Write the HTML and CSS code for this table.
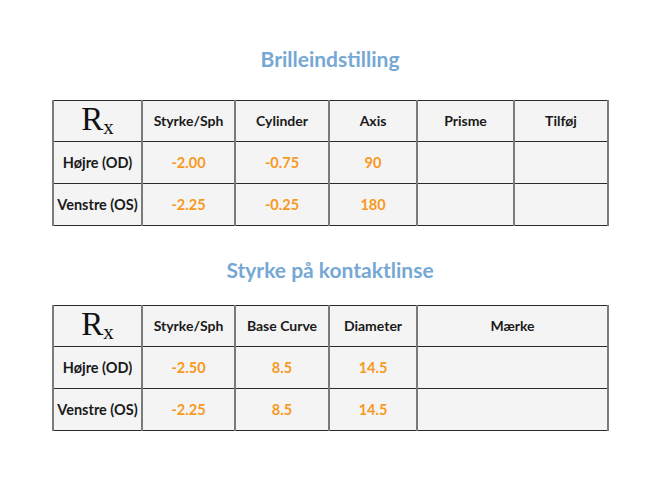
FILE: index.html
```html
<!DOCTYPE html>
<html>
<head>
<meta charset="utf-8">
<link rel="stylesheet" href="styles.css">
</head>
<body>
<div class="page">
  <h2 class="title t1">Brilleindstilling</h2>
  <table class="rx">
    <colgroup>
      <col class="c1"><col class="c2"><col class="c3"><col class="c4"><col class="c5"><col class="c6">
    </colgroup>
    <tr class="head">
      <td><span class="rxsym">R</span><span class="sub">x</span></td>
      <td>Styrke/Sph</td><td>Cylinder</td><td>Axis</td><td>Prisme</td><td>Tilføj</td>
    </tr>
    <tr>
      <td class="lbl">Højre (OD)</td><td class="val">-2.00</td><td class="val">-0.75</td><td class="val">90</td><td></td><td></td>
    </tr>
    <tr>
      <td class="lbl">Venstre (OS)</td><td class="val">-2.25</td><td class="val">-0.25</td><td class="val">180</td><td></td><td></td>
    </tr>
  </table>
  <h2 class="title t2">Styrke på kontaktlinse</h2>
  <table class="rx">
    <colgroup>
      <col class="c1"><col class="c2"><col class="c3"><col class="c4"><col class="c56">
    </colgroup>
    <tr class="head">
      <td><span class="rxsym">R</span><span class="sub">x</span></td>
      <td>Styrke/Sph</td><td>Base Curve</td><td>Diameter</td><td>Mærke</td>
    </tr>
    <tr>
      <td class="lbl">Højre (OD)</td><td class="val">-2.50</td><td class="val">8.5</td><td class="val">14.5</td><td></td>
    </tr>
    <tr>
      <td class="lbl">Venstre (OS)</td><td class="val">-2.25</td><td class="val">8.5</td><td class="val">14.5</td><td></td>
    </tr>
  </table>
</div>
</body>
</html>
```
FILE: styles.css
```css
html, body {
  margin: 0;
  padding: 0;
  background: #ffffff;
}
.page {
  width: 660px;
  display: flex;
  flex-direction: column;
  align-items: center;
  font-family: Lato, "Liberation Sans", sans-serif;
}
.title {
  margin: 0;
  font-size: 21px;
  font-weight: 700;
  color: #75a8d4;
  line-height: 24px;
  text-align: center;
}
.t1 { margin-top: 47px; margin-bottom: 29px; }
.t2 { margin-top: 32px; margin-bottom: 23px; }
.rx {
  border-collapse: collapse;
  table-layout: fixed;
  width: 555px;
  margin-left: 1px;
}
.c1 { width: 89px; }
.c2 { width: 93px; }
.c3 { width: 94px; }
.c4 { width: 88px; }
.c5 { width: 97px; }
.c6 { width: 94px; }
.c56 { width: 191px; }
.rx td {
  background: #f4f4f4;
  border-top: 1px solid #2a2a2a;
  border-bottom: 1px solid #2a2a2a;
  border-left: 2px solid #7a7a7a;
  border-right: 2px solid #7a7a7a;
  height: 40px;
  padding: 0 0 1px;
  text-align: center;
  vertical-align: middle;
  font-size: 14px;
  font-weight: 700;
  color: #1a1a1a;
}
.rx tr.head td { height: 38px; padding: 0 0 2px; }
.rx td.lbl { font-size: 14.5px; }
.rx td.val {
  color: #f7991e;
  font-size: 14.5px;
}
.rxsym {
  font-family: "Liberation Serif", "Times New Roman", serif;
  font-weight: 400;
  font-size: 33px;
  color: #111;
  line-height: 26px;
  vertical-align: middle;
}
.sub {
  font-family: "Liberation Serif", "Times New Roman", serif;
  font-weight: 400;
  font-size: 21px;
  color: #111;
  line-height: 14px;
  vertical-align: -11px;
}
```
